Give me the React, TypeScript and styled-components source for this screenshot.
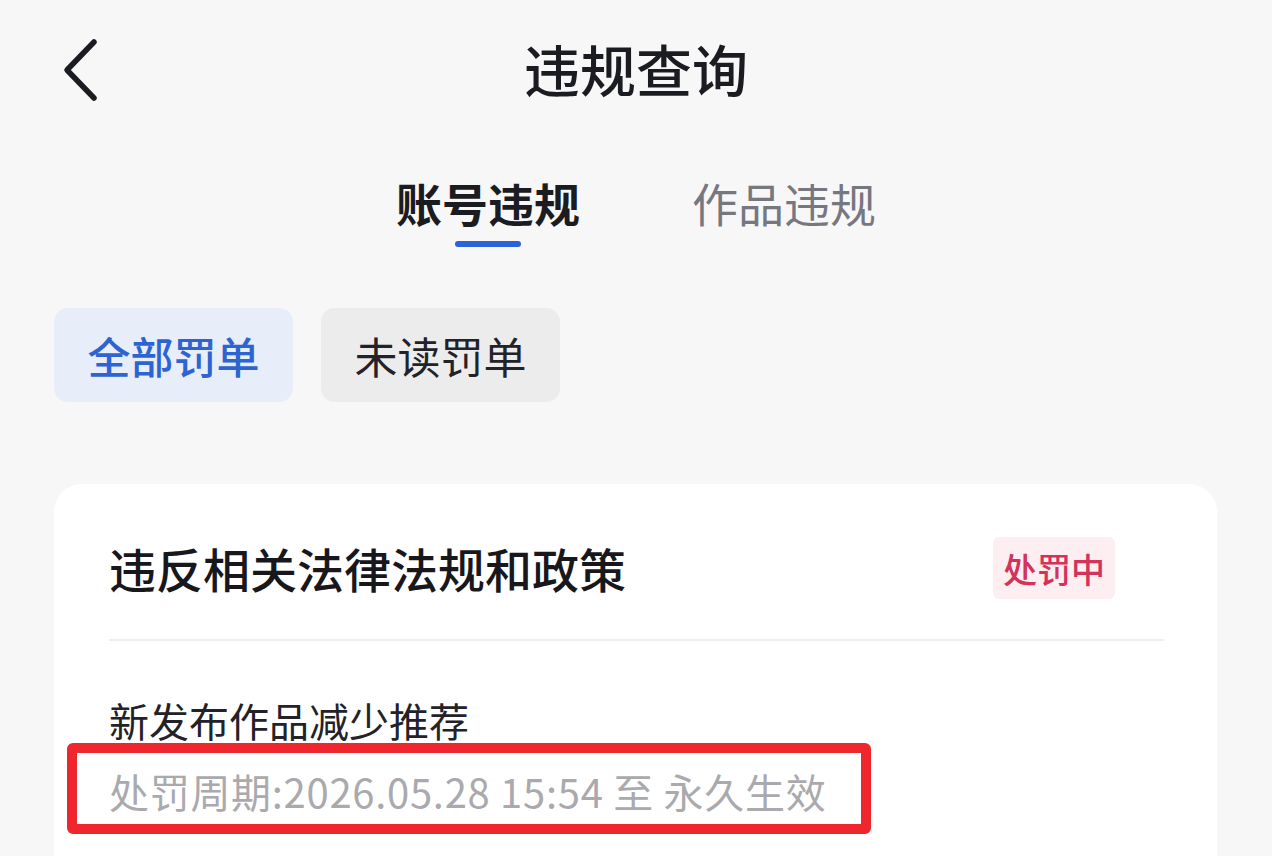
import styled, { createGlobalStyle } from 'styled-components';

const GlobalStyle = createGlobalStyle`
  html, body {
    margin: 0;
    padding: 0;
    background: #f7f7f8;
  }
  body {
    font-family: "Noto Sans CJK SC", "Noto Sans", sans-serif;
    color: #1b1b22;
  }
`;

const Page = styled.div`
  width: 1272px;
  height: 856px;
  overflow: hidden;
  background: #f7f7f8;
`;

const Header = styled.header`
  position: relative;
  display: flex;
  align-items: center;
  justify-content: center;
  height: 140px;
`;

const BackButton = styled.button`
  position: absolute;
  left: 52px;
  top: 34px;
  width: 56px;
  height: 72px;
  padding: 0;
  border: none;
  background: transparent;
  display: flex;
  align-items: center;
  justify-content: center;
`;

const Title = styled.h1`
  margin: -4px 0 0;
  font-size: 56px;
  line-height: 72px;
  font-weight: 500;
  color: #1b1b22;
`;

const Tabs = styled.nav`
  display: flex;
  justify-content: center;
  gap: 112px;
  margin-top: 34px;
`;

const Tab = styled.div<{ $active?: boolean }>`
  display: flex;
  flex-direction: column;
  align-items: center;
  font-size: 46px;
  line-height: 56px;
  font-weight: ${(p) => (p.$active ? 600 : 400)};
  color: ${(p) => (p.$active ? '#1b1b22' : '#77777f')};

  &::after {
    content: '';
    display: block;
    width: 66px;
    height: 6px;
    margin-top: 11px;
    border-radius: 3px;
    background: ${(p) => (p.$active ? '#2b62d6' : 'transparent')};
  }
`;

const Filters = styled.div`
  display: flex;
  gap: 28px;
  padding: 0 54px;
  margin-top: 61px;
`;

const Chip = styled.div<{ $active?: boolean }>`
  display: flex;
  align-items: center;
  justify-content: center;
  width: 239px;
  height: 94px;
  border-radius: 14px;
  font-size: 43px;
  font-weight: ${(p) => (p.$active ? 500 : 400)};
  color: ${(p) => (p.$active ? '#2d64d2' : '#222228')};
  background: ${(p) => (p.$active ? '#e7eef9' : '#ececed')};
`;

const Card = styled.section`
  margin: 82px 55px 0 54px;
  padding: 53px 53px 0 55px;
  background: #ffffff;
  border-radius: 28px 28px 0 0;
  height: 400px;
`;

const CardHead = styled.div`
  display: flex;
  align-items: center;
  justify-content: space-between;
  height: 62px;
`;

const CardTitle = styled.h2`
  margin: 0;
  font-size: 47px;
  line-height: 62px;
  font-weight: 500;
  color: #17171c;
`;

const StatusBadge = styled.span`
  display: flex;
  align-items: center;
  justify-content: center;
  width: 122px;
  height: 62px;
  border-radius: 6px;
  background: #fdeef1;
  color: #d3325a;
  font-size: 34px;
  font-weight: 500;
  margin-right: 49px;
`;

const Divider = styled.hr`
  margin: 40px 0 0;
  border: none;
  height: 2px;
  background: #eeeeef;
`;

const Penalty = styled.div`
  margin-top: 51px;
  font-size: 40px;
  line-height: 56px;
  color: #222228;
`;

const Period = styled.div`
  position: relative;
  margin-top: 15px;
  font-size: 40px;
  line-height: 56px;
  color: #aaaaae;
  letter-spacing: 0.7px;
`;

const Highlight = styled.span`
  position: absolute;
  left: -42px;
  top: -20px;
  width: 804px;
  height: 91px;
  box-sizing: border-box;
  border: 10px solid #f0262e;
  border-radius: 6px;
  pointer-events: none;
`;

export default function App() {
  return (
    <Page>
      <GlobalStyle />
      <Header>
        <BackButton aria-label="返回">
          <svg width="40" height="64" viewBox="0 0 40 64" fill="none">
            <path
              d="M34 4 L7 32 L34 60"
              stroke="#1b1b22"
              strokeWidth="5.5"
              strokeLinecap="round"
              strokeLinejoin="round"
            />
          </svg>
        </BackButton>
        <Title>违规查询</Title>
      </Header>

      <Tabs>
        <Tab $active>账号违规</Tab>
        <Tab>作品违规</Tab>
      </Tabs>

      <Filters>
        <Chip $active>全部罚单</Chip>
        <Chip>未读罚单</Chip>
      </Filters>

      <Card>
        <CardHead>
          <CardTitle>违反相关法律法规和政策</CardTitle>
          <StatusBadge>处罚中</StatusBadge>
        </CardHead>
        <Divider />
        <Penalty>新发布作品减少推荐</Penalty>
        <Period>
          处罚周期:2026.05.28 15:54 至 永久生效
          <Highlight />
        </Period>
      </Card>
    </Page>
  );
}
